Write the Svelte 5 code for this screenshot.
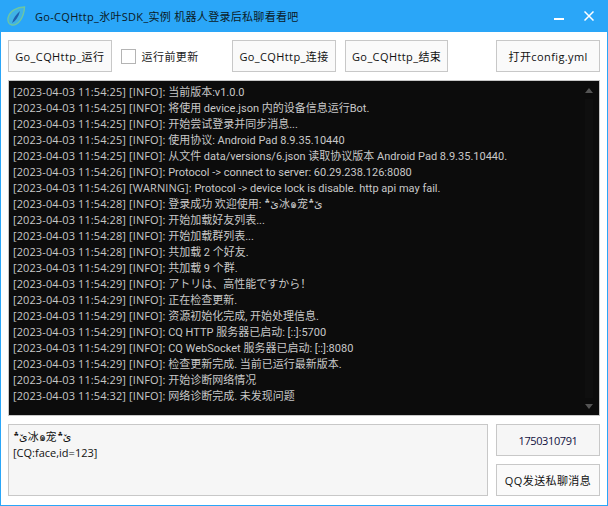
<script>
  const nick = 'ێ؞冰๑宠ێ؞';
  const logLines = [
    ['04-03 11:54:25', 'INFO', '当前版本:v1.0.0'],
    ['04-03 11:54:25', 'INFO', '将使用 device.json 内的设备信息运行Bot.'],
    ['04-03 11:54:25', 'INFO', '开始尝试登录并同步消息...'],
    ['04-03 11:54:25', 'INFO', '使用协议: Android Pad 8.9.35.10440'],
    ['04-03 11:54:25', 'INFO', '从文件 data/versions/6.json 读取协议版本 Android Pad 8.9.35.10440.'],
    ['04-03 11:54:26', 'INFO', 'Protocol -> connect to server: 60.29.238.126:8080'],
    ['04-03 11:54:26', 'WARNING', 'Protocol -> device lock is disable. http api may fail.'],
    ['04-03 11:54:28', 'INFO', '登录成功 欢迎使用: ' + nick],
    ['04-03 11:54:28', 'INFO', '开始加载好友列表...'],
    ['04-03 11:54:28', 'INFO', '开始加载群列表...'],
    ['04-03 11:54:28', 'INFO', '共加载 2 个好友.'],
    ['04-03 11:54:29', 'INFO', '共加载 9 个群.'],
    ['04-03 11:54:29', 'INFO', 'アトリは、高性能ですから！'],
    ['04-03 11:54:29', 'INFO', '正在检查更新.'],
    ['04-03 11:54:29', 'INFO', '资源初始化完成, 开始处理信息.'],
    ['04-03 11:54:29', 'INFO', 'CQ HTTP 服务器已启动: [::]:5700'],
    ['04-03 11:54:29', 'INFO', 'CQ WebSocket 服务器已启动: [::]:8080'],
    ['04-03 11:54:29', 'INFO', '检查更新完成. 当前已运行最新版本.'],
    ['04-03 11:54:29', 'INFO', '开始诊断网络情况'],
    ['04-03 11:54:32', 'INFO', '网络诊断完成. 未发现问题']
  ];
</script>

<div class="window">
  <div class="titlebar">
    <svg class="logo" width="20" height="20" viewBox="0 0 20 20">
      <path d="M18.5 1C11 1 3.5 5 2 12C1.5 15.5 3 18.5 6 19C12 19.5 18 12 18.5 1Z" fill="#3fb2e6" stroke="#6cc6a4" stroke-width="1.4" />
      <path d="M14 5C10 8.5 7.5 12 6 17C9.5 15 12.5 11 14 5Z" fill="#1f5fae" />
    </svg>
    <span class="title">Go-CQHttp_氷叶SDK_实例 机器人登录后私聊看看吧</span>
    <div class="winbtns">
      <span class="minimize"></span>
      <svg width="10" height="10" viewBox="0 0 10 10">
        <path d="M0.5 0.5L9.5 9.5M9.5 0.5L0.5 9.5" stroke="#fff" stroke-width="1.5" fill="none" />
      </svg>
    </div>
  </div>

  <div class="content">
    <div class="toolbar">
      <button>Go_CQHttp_运行</button>
      <label class="check"><span class="box"></span>运行前更新</label>
      <button class="connect">Go_CQHttp_连接</button>
      <button>Go_CQHttp_结束</button>
      <button class="config">打开config.yml</button>
    </div>

    <div class="log">
      <div class="lines">
        {#each logLines as line}
          <div class="line"><span class="stamp">[2023-{line[0]}] [{line[1]}]:</span> {line[2]}</div>
        {/each}
      </div>
      <div class="scrollbar">
        <span class="arrow up"></span>
        <span class="thumb"></span>
        <span class="arrow down"></span>
      </div>
    </div>

    <div class="bottom">
      <div class="message"><div>{nick}</div><div>[CQ:face,id=123]</div></div>
      <div class="side">
        <div class="qq">1750310791</div>
        <button>QQ发送私聊消息</button>
      </div>
    </div>
  </div>
</div>

<style>
  :global(body) {
    margin: 0;
  }

  .window {
    width: 608px;
    height: 506px;
    box-sizing: border-box;
    display: flex;
    flex-direction: column;
    background: #fff;
    border: 1px solid #2aa6f8;
    border-top: none;
    font-family: "Open Sans", "Noto Sans CJK SC", "DejaVu Sans", sans-serif;
    font-size: 11px;
    letter-spacing: 0.4px;
    color: #111;
    overflow: hidden;
  }

  .titlebar {
    height: 32px;
    flex: none;
    display: flex;
    align-items: center;
    background: #2aa6f8;
    padding: 0 10px 0 5px;
  }

  .logo {
    flex: none;
  }

  .title {
    margin-left: 9px;
    letter-spacing: 0.3px;
    color: #0b1a26;
  }

  .winbtns {
    margin-left: auto;
    display: flex;
    align-items: center;
    gap: 20px;
    padding-right: 3px;
  }

  .minimize {
    width: 10px;
    height: 2px;
    margin-top: 5px;
    background: #fff;
  }

  .content {
    flex: 1;
    display: flex;
    flex-direction: column;
    padding: 8px 7px 9px;
    gap: 8px;
    min-height: 0;
  }

  .toolbar {
    display: flex;
    align-items: center;
    gap: 9px;
    height: 32px;
    flex: none;
  }

  button {
    height: 32px;
    width: 104px;
    box-sizing: border-box;
    padding: 0;
    border: 1px solid #c8c8c8;
    background: #fafafa;
    font: inherit;
    letter-spacing: inherit;
    color: #111;
  }

  .check {
    display: flex;
    align-items: center;
    gap: 6px;
    width: 103px;
    color: #222;
  }

  .box {
    width: 13px;
    height: 13px;
    border: 1px solid #b4b4b4;
    background: #fff;
  }

  .config {
    margin-left: 39px;
  }

  .log {
    flex: 1;
    display: flex;
    min-height: 0;
    background: #0c0c0c;
    border: 1px solid #c8c8c8;
    box-sizing: border-box;
  }

  .lines {
    flex: 1;
    padding: 3px 0 0 4px;
    color: #c8c8c8;
    font-family: Roboto, "Noto Sans CJK SC", "DejaVu Sans", sans-serif;
    letter-spacing: 0;
    white-space: nowrap;
    overflow: hidden;
  }

  .line {
    height: 16px;
    line-height: 16px;
  }

  .stamp {
    font-family: "Open Sans", sans-serif;
    letter-spacing: 0.1px;
  }

  .scrollbar {
    width: 16px;
    margin-right: 2px;
    flex: none;
    display: flex;
    flex-direction: column;
    align-items: center;
    padding: 7px 0 6px;
    box-sizing: border-box;
  }

  .arrow {
    width: 0;
    height: 0;
    border-left: 4px solid transparent;
    border-right: 4px solid transparent;
  }

  .arrow.up {
    border-bottom: 5px solid #555;
  }

  .arrow.down {
    border-top: 5px solid #555;
  }

  .thumb {
    flex: 1;
    width: 8px;
    margin: 6px 0;
    background: #0f0f0f;
  }

  .bottom {
    display: flex;
    gap: 8px;
    height: 72px;
    flex: none;
  }

  .message {
    flex: 1;
    box-sizing: border-box;
    border: 1px solid #c8c8c8;
    background: #f6f6f6;
    padding: 4px 4px;
    line-height: 16px;
    letter-spacing: 0;
  }

  .side {
    width: 104px;
    display: flex;
    flex-direction: column;
    gap: 8px;
  }

  .qq {
    height: 32px;
    box-sizing: border-box;
    border: 1px solid #c8c8c8;
    background: #f6f6f6;
    display: flex;
    align-items: center;
    justify-content: center;
    letter-spacing: -0.4px;
    color: #101040;
  }
</style>
